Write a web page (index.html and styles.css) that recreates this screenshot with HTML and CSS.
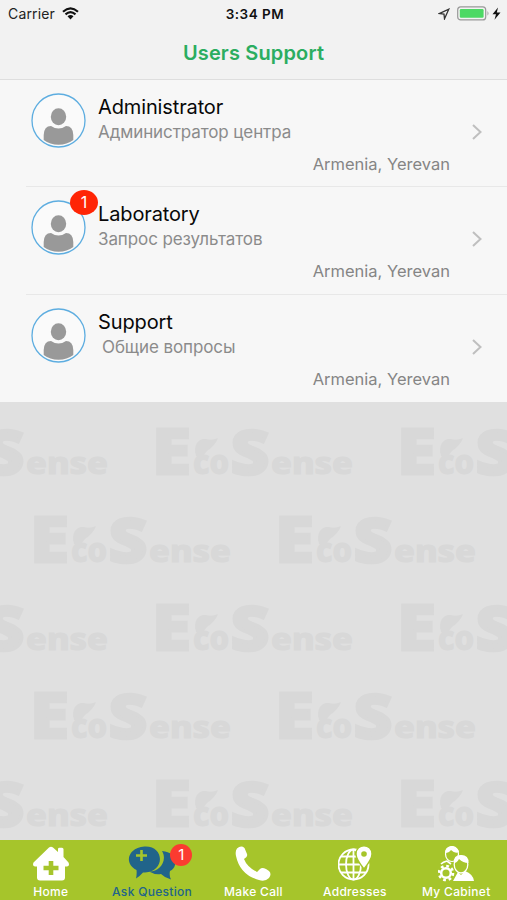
FILE: index.html
```html
<!DOCTYPE html>
<html lang="en">
<head>
<meta charset="utf-8">
<title>Users Support</title>
<link rel="stylesheet" href="styles.css">
</head>
<body>
<svg class="defs" aria-hidden="true">
  <symbol id="mark" viewBox="0 0 200 50">
    <g class="mark-text">
      <text x="-3" y="46.500" font-size="62" stroke-width="3" textLength="39" lengthAdjust="spacingAndGlyphs">E</text>
      <text x="38" y="47" font-size="33" textLength="36" lengthAdjust="spacingAndGlyphs">co</text>
      <text x="76" y="46.500" font-size="60" stroke-width="3.500" textLength="38" lengthAdjust="spacingAndGlyphs">S</text>
      <text x="116" y="47" font-size="31" textLength="82" lengthAdjust="spacingAndGlyphs">ense</text>
    </g>
    <path d="M41 29C38 18 43 11 51 12Q57 14 63 11Q60 19 52 24L47 30Z"/>
  </symbol>
  <symbol id="person" viewBox="0 0 55 55">
    <circle class="ring" cx="27.5" cy="27.5" r="26.5"/>
    <ellipse cx="27.5" cy="23.700" rx="7.700" ry="8.500"/>
    <path d="M12.700 47V42Q13 33 20 33Q27.500 38 35 33Q42 33 42.300 42V47Q36 51.700 27.500 51.700Q19 51.700 12.700 47Z"/>
  </symbol>
</svg>
<div class="screen">
  <header class="top">
    <div class="status">
      <div class="carrier"><span>Carrier</span>
        <svg width="17" height="13" viewBox="0 0 17 13"><path d="M1 4.800Q8.500-2 16 4.800M3.500 7.400Q8.500 3 13.500 7.400" fill="none" stroke="#111" stroke-width="2.100"/><path d="M5.500 9.300Q8.500 6.800 11.500 9.300L8.500 12.500Z" fill="#111"/></svg>
      </div>
      <div class="time">3:34 PM</div>
      <div class="power">
        <svg width="12" height="12" viewBox="0 0 12 12"><path d="M1.200 5.600L10.800 1.200L6.500 10.800L6 6.200Z" fill="none" stroke="#333" stroke-width="1.300"/></svg>
        <svg width="45" height="15" viewBox="0 0 45 15"><rect x=".7" y=".9" width="28" height="13" rx="3" fill="#f3f3f3" stroke="#999" stroke-width="1.200"/><rect x="2.800" y="3" width="23.800" height="8.800" rx="1.200" fill="#4cd964"/><path d="M30.500 5Q32.500 7.400 30.500 9.800Z" fill="#999"/><path d="M41 1.500L35.500 8.300H39L37.500 13.700L43.500 6.600H39.800Z" fill="#111"/></svg>
      </div>
    </div>
    <h1>Users Support</h1>
  </header>
  <div class="list">
    <div class="row">
      <div class="avatar"><svg><use href="#person"/></svg></div>
      <div class="info"><div class="name n1">Administrator</div><div class="sub s1">Администратор центра</div><div class="place">Armenia, Yerevan</div></div>
      <svg class="chevron" viewBox="0 0 10 16"><path d="M1 1L8.500 8L1 15"/></svg>
    </div>
    <div class="row">
      <div class="avatar"><svg><use href="#person"/></svg><span class="badge">1</span></div>
      <div class="info"><div class="name n2">Laboratory</div><div class="sub s2">Запрос результатов</div><div class="place">Armenia, Yerevan</div></div>
      <svg class="chevron" viewBox="0 0 10 16"><path d="M1 1L8.500 8L1 15"/></svg>
    </div>
    <div class="row">
      <div class="avatar"><svg><use href="#person"/></svg></div>
      <div class="info"><div class="name n3">Support</div><div class="sub s3">Общие вопросы</div><div class="place">Armenia, Yerevan</div></div>
      <svg class="chevron" viewBox="0 0 10 16"><path d="M1 1L8.500 8L1 15"/></svg>
    </div>
  </div>
  <main class="pattern">
    <div class="marks shift"><svg><use href="#mark"/></svg><svg><use href="#mark"/></svg><svg><use href="#mark"/></svg></div>
    <div class="marks"><svg><use href="#mark"/></svg><svg><use href="#mark"/></svg></div>
    <div class="marks shift"><svg><use href="#mark"/></svg><svg><use href="#mark"/></svg><svg><use href="#mark"/></svg></div>
    <div class="marks"><svg><use href="#mark"/></svg><svg><use href="#mark"/></svg></div>
    <div class="marks shift"><svg><use href="#mark"/></svg><svg><use href="#mark"/></svg><svg><use href="#mark"/></svg></div>
  </main>
  <nav class="tabs">
    <a class="tab"><svg width="38" height="36" viewBox="0 0 38 36"><path d="M17 1.500Q19 0 21 1.500L26 6V3Q26 1.800 27.500 1.800H30Q31.500 1.800 31.500 3.300V11L36.500 16.500Q38 20 35 20.500H33V31.500Q33 34.500 30 34.500H8Q5 34.500 5 31.500V20.500H3Q0 20 1.500 16.500Z" fill="#fff"/><path d="M16.700 15H21.300V19.700H26.500V24.300H21.300V29H16.700V24.300H11.500V19.700H16.700Z" fill="#a6c52b"/></svg><span>Home</span></a>
    <a class="tab active"><svg width="48" height="36" viewBox="0 0 48 36"><g fill="#21648a"><path d="M34 5C44 6 49 12 47 19Q46 23 42 25Q41 30 43 33.500Q37 32 33 28Q27 29 21 25.500C31 26 40 15 34 5Z"/><path d="M16.500.5C37-.5 37 26 17 26.500H15Q12 30 8 32.500Q9 28 8.500 24C-4 18-1 2 16.500.5Z"/></g><path d="M13.500 4V15M8 9.500H19" stroke="#a6c52b" stroke-width="2.600"/></svg><span>Ask Question</span><b class="tab-badge">1</b></a>
    <a class="tab"><svg width="36" height="36" viewBox="0 0 36 36"><path d="M2 2.500Q6-1 9.500 2L12 8Q13 11 9 13Q12 21 22 26L25 23Q27 21 31 23L34 25Q37 28 34 32Q30 36 24 34Q5 29 1 10Q0 5 2 2.500Z" fill="#fff"/></svg><span>Make Call</span></a>
    <a class="tab"><svg width="34" height="36" viewBox="0 0 34 36"><g fill="none" stroke="#fff" stroke-width="1.800"><circle cx="15.500" cy="18.500" r="15"/><ellipse cx="15.500" cy="18.500" rx="7.500" ry="15"/><path d="M15.500 3.500V33.500M.5 18.500H30.500M3 10.500H28M3 26.500H28"/></g><path d="M26 23Q18 13 18 8C18-3 34-3 34 8Q34 13 26 23Z" fill="#fff" stroke="#a6c52b" stroke-width="1.400"/><circle cx="26" cy="8" r="2.800" fill="#a6c52b"/></svg><span>Addresses</span></a>
    <a class="tab"><svg width="36" height="36" viewBox="0 0 36 36"><ellipse cx="14" cy="8" rx="6.500" ry="7.500" fill="#a6c52b" stroke="#fff" stroke-width="1.200"/><path d="M7 7Q7 0 14 .5Q20 1 21 6Q17 8 13 4Q11 7 7 7Z" fill="#fff"/><path d="M3 18Q5 16 9 15L13 18" fill="none" stroke="#fff" stroke-width="1.600"/><path d="M15 35L20 26L23 29L27 25Q35 28 36 35Z" fill="#fff"/><ellipse cx="23" cy="18.500" rx="6.800" ry="8.500" fill="#a6c52b" stroke="#fff" stroke-width="1.300"/><path d="M16 17Q15 9 23 9Q31 9 30.500 17Q25 17 21 13Q19 17 16 17Z" fill="#fff"/><circle cx="8" cy="27" r="7" fill="none" stroke="#fff" stroke-width="2.600" stroke-dasharray="2.750"/><circle cx="8" cy="27" r="4.800" fill="#a6c52b" stroke="#fff" stroke-width="2.500"/></svg><span>My Cabinet</span></a>
  </nav>
</div>
</body>
</html>
```

FILE: styles.css
```css
* { box-sizing: border-box; }
body { margin: 0; font-family: Inter, Roboto, "Liberation Sans", sans-serif; }
svg { display: block; flex: none; }
.defs { width: 0; height: 0; position: absolute; }
.screen { width: 507px; height: 900px; display: flex; flex-direction: column; overflow: hidden; background: #e0e0e0; }
.top { height: 80px; background: #f2f2f2; border-bottom: 1px solid #dedede; flex: none; }
.status { height: 27px; display: grid; grid-template-columns: 1fr auto 1fr; align-items: center; padding: 0 5px 0 8px; font-size: 14px; color: #222; }
.carrier, .power { display: flex; align-items: center; gap: 7px; }
.carrier { letter-spacing: .15px; }
.power { justify-content: flex-end; }
.time { font-weight: 600; font-size: 13.500px; letter-spacing: .5px; color: #111; }
h1 { margin: 11px 0 0; text-align: center; font-size: 20px; line-height: 30px; font-weight: 600; letter-spacing: .15px; color: #2bad60; }
.list { flex: none; height: 322px; background: #f7f7f7; }
.row { height: 107.300px; display: flex; margin-left: 26px; padding-left: 5px; border-bottom: 1px solid #e8e8e8; }
.row:last-child { border-bottom: 0; }
.avatar { position: relative; width: 55px; height: 55px; margin-top: 13px; flex: none; }
.avatar svg { width: 55px; height: 55px; fill: #999; }
.ring { fill: #fafafa; stroke: #5dade0; stroke-width: 1.300; }
.badge { position: absolute; left: 39px; top: -10px; width: 28px; height: 25px; border-radius: 50%; background: #ff2505; color: #fff; font-size: 16px; line-height: 25px; text-align: center; }
.info { width: 352px; margin-left: 12px; padding-top: 13px; white-space: pre; }
.name { font-size: 20px; line-height: 28px; letter-spacing: -.13px; color: #080808; }
.sub { font-size: 17px; line-height: 22px; letter-spacing: -.1px; color: #8b8b8b; }
.s3 { padding-left: 4px; }
.place { margin-top: 10px; font-size: 16.500px; line-height: 22px; color: #858585; text-align: right; }
.chevron { width: 10px; height: 16px; margin: 44px 0 0 22px; fill: none; stroke: #bfbfbf; stroke-width: 2; }
.pattern { flex: 1; min-height: 0; padding-top: 25px; overflow: hidden; }
.marks { height: 88px; display: flex; gap: 45px; margin-left: 33px; }
.marks.shift { margin-left: -90px; }
.marks svg { width: 200px; height: 50px; fill: #d8d8d8; }
.mark-text { font-family: "Noto Sans", "Open Sans", sans-serif; font-weight: 800; stroke: #d8d8d8; stroke-width: 1; }
.tabs { height: 60px; flex: none; background: #a6c52b; display: grid; grid-template-columns: repeat(5, 1fr); }
.tab { position: relative; display: flex; flex-direction: column; align-items: center; padding-top: 6px; color: #fff; font-size: 12px; font-weight: 500; letter-spacing: .3px; line-height: 16px; white-space: nowrap; }
.tab span { margin-top: 2px; }
.active { color: #21648a; }
.tab-badge { position: absolute; left: 69px; top: 4px; width: 22px; height: 22px; border-radius: 50%; background: #fb3b30; color: #fff; font-size: 15px; font-weight: 400; line-height: 22px; text-align: center; }
```
